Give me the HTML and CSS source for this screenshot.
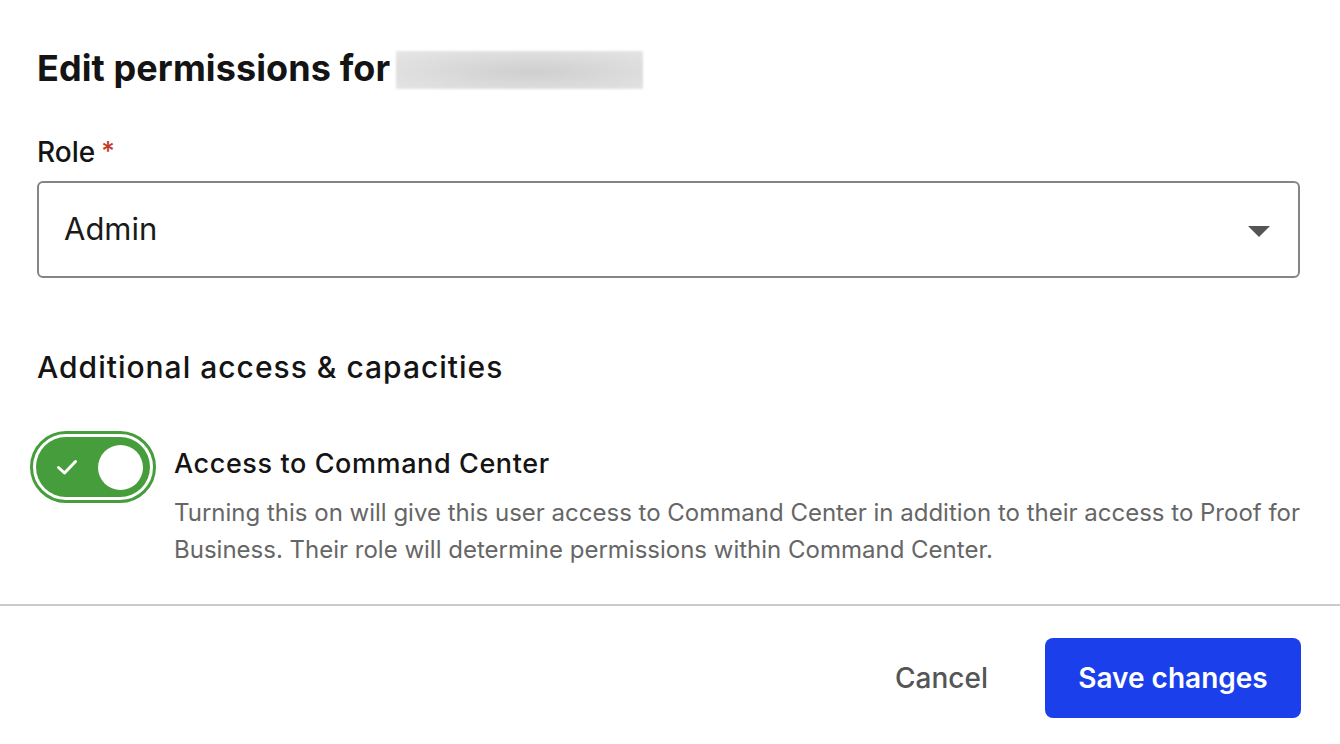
FILE: index.html
```html
<!DOCTYPE html>
<html lang="en">
<head>
<meta charset="UTF-8">
<title>Edit permissions</title>
<link rel="stylesheet" href="styles.css">
</head>
<body>
<div class="modal">
  <div class="modal-body">
    <h1 class="title">Edit permissions for <span class="redacted"></span></h1>

    <div class="field">
      <label class="field-label" for="role">Role<span class="required">*</span></label>
      <div class="select">
        <span class="select-value">Admin</span>
        <svg class="select-caret" width="22" height="11" viewBox="0 0 22 11"><path d="M0 0h22L11 11z" fill="#555"/></svg>
      </div>
    </div>

    <h2 class="section-title">Additional access &amp; capacities</h2>

    <div class="toggle-row">
      <div class="toggle is-on">
        <svg class="toggle-check" width="22" height="16" viewBox="0 0 22 16"><path d="M2.5 8.5l6 5.5L19.5 2.5" fill="none" stroke="#fff" stroke-width="3" stroke-linecap="round" stroke-linejoin="round"/></svg>
        <span class="toggle-knob"></span>
      </div>
      <div class="toggle-text">
        <div class="toggle-label">Access to Command Center</div>
        <p class="toggle-desc">Turning this on will give this user access to Command Center in addition to their access to Proof for Business. Their role will determine permissions within Command Center.</p>
      </div>
    </div>
  </div>

  <div class="modal-footer">
    <button type="button" class="btn btn-text">Cancel</button>
    <button type="button" class="btn btn-primary">Save changes</button>
  </div>
</div>
</body>
</html>
```

FILE: styles.css
```css
body {
  margin: 0;
  background-color: #fff;
  font-family: Inter, "Noto Sans", Arial, sans-serif;
  color: #141414;
}

.modal-body {
  padding: 46px 40px 0 37px;
}

.title {
  margin: 0;
  font-size: 36px;
  line-height: 44px;
  font-weight: 700;
  letter-spacing: 0.1px;
  display: flex;
  align-items: center;
}

.redacted {
  display: inline-block;
  width: 247px;
  height: 38px;
  margin-left: 6px;
  margin-top: 4px;
  background: radial-gradient(ellipse at 55% 55%, #cfcfcf 0%, #dadada 45%, #e6e6e6 100%);
  filter: blur(1px);
}

.field {
  margin-top: 43px;
}

.field-label {
  display: block;
  font-size: 28px;
  line-height: 36px;
  font-weight: 500;
  margin-bottom: 11px;
}

.required {
  color: #c0392b;
  margin-left: 6px;
  font-size: 26px;
  vertical-align: 2px;
}

.select {
  display: flex;
  align-items: center;
  justify-content: space-between;
  box-sizing: border-box;
  height: 97px;
  padding: 0 28px 2px 25px;
  border: 2px solid #858585;
  border-radius: 6px;
}

.select-value {
  font-size: 31px;
  font-weight: 400;
  color: #1a1a1a;
}

.select-caret {
  margin-top: 6px;
}

.section-title {
  margin: 70px 0 0;
  font-size: 30px;
  line-height: 38px;
  font-weight: 500;
  letter-spacing: 1px;
}

.toggle-row {
  display: flex;
  align-items: flex-start;
  gap: 24px;
  margin-top: 51px;
}

.toggle {
  flex: none;
  width: 114px;
  height: 60px;
  margin-left: -1px;
  border-radius: 30px;
  background-color: #469d3b;
  outline: 3px solid #469d3b;
  outline-offset: 3px;
  display: flex;
  align-items: center;
  justify-content: space-between;
  padding: 0 7px 0 20px;
  box-sizing: border-box;
}

.toggle-knob {
  width: 45px;
  height: 45px;
  border-radius: 50%;
  background-color: #fff;
}

.toggle-text {
  padding-top: 10px;
}

.toggle-label {
  font-size: 27px;
  line-height: 34px;
  font-weight: 500;
  letter-spacing: 0.6px;
}

.toggle-desc {
  margin: 13px 0 0;
  font-size: 24px;
  line-height: 37px;
  color: #666;
}

.modal-footer {
  margin-top: 36px;
  border-top: 2px solid #cbcbcb;
  display: flex;
  justify-content: flex-end;
  align-items: center;
  gap: 45px;
  padding: 32px 39px 0 0;
}

.btn {
  font-family: inherit;
  font-size: 28px;
  font-weight: 600;
  border: none;
  border-radius: 8px;
  cursor: pointer;
}

.btn-text {
  background: none;
  color: #555;
  font-weight: 500;
  padding: 0 12px;
}

.btn-primary {
  width: 256px;
  height: 80px;
  background-color: #1b40eb;
  color: #fff;
}

.btn-primary:hover {
  background-color: #1433c4;
}
```
